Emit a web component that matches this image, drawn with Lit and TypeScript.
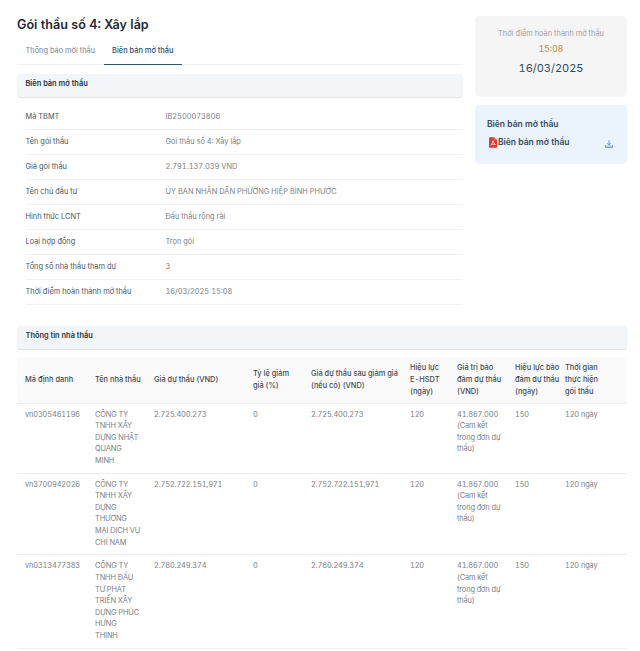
import { LitElement, html, css, svg } from 'lit';
import { customElement } from 'lit/decorators.js';

const INFO: [string, string][] = [
  ['Mã TBMT', 'IB2500073806'],
  ['Tên gói thầu', 'Gói thầu số 4: Xây lắp'],
  ['Giá gói thầu', '2.791.137.039 VND'],
  ['Tên chủ đầu tư', 'ỦY BAN NHÂN DÂN PHƯỜNG HIỆP BÌNH PHƯỚC'],
  ['Hình thức LCNT', 'Đấu thầu rộng rãi'],
  ['Loại hợp đồng', 'Trọn gói'],
  ['Tổng số nhà thầu tham dự', '3'],
  ['Thời điểm hoàn thành mở thầu', '16/03/2025 15:08'],
];

// titles carry their line breaks, the cells wrap by hand
const COLS = [
  { title: 'Mã định danh', width: 70 },
  { title: 'Tên nhà thầu', width: 59 },
  { title: 'Giá dự thầu (VND)', width: 99 },
  { title: 'Tỷ lệ giảm\ngiá (%)', width: 58 },
  { title: 'Giá dự thầu sau giảm giá\n(nếu có) (VND)', width: 99 },
  { title: 'Hiệu lực\nE-HSDT\n(ngày)', width: 47 },
  { title: 'Giá trị bảo\nđảm dự thầu\n(VND)', width: 58 },
  { title: 'Hiệu lực bảo\nđảm dự thầu\n(ngày)', width: 50 },
  { title: 'Thời gian\nthực hiện\ngói thầu', width: 70 },
];

const BOND = '41.867.000\n(Cam kết\ntrong đơn dự\nthầu)';

const ROWS = [
  ['vn0305461196', 'CÔNG TY\nTNHH XÂY\nDỰNG NHẬT\nQUANG\nMINH', '2.725.400.273', '0', '2.725.400.273', '120', BOND, '150', '120 ngày'],
  ['vn3700942026', 'CÔNG TY\nTNHH XÂY\nDỰNG\nTHƯƠNG\nMẠI DỊCH VỤ\nCHÍ NAM', '2.752.722.151,971', '0', '2.752.722.151,971', '120', BOND, '150', '120 ngày'],
  ['vn0313477383', 'CÔNG TY\nTNHH ĐẦU\nTƯ PHÁT\nTRIỂN XÂY\nDỰNG PHÚC\nHƯNG\nTHỊNH', '2.780.249.374', '0', '2.780.249.374', '120', BOND, '150', '120 ngày'],
];

const pdfIcon = svg`<svg class="pdf" viewBox="0 0 9 12" width="8" height="11">
  <path d="M1 0h5l3 3v8a1 1 0 0 1-1 1H1a1 1 0 0 1-1-1V1a1 1 0 0 1 1-1z" fill="#e2382e"/>
  <path d="M6 0l3 3H6z" fill="#f29a94"/>
  <path d="M4.400 4c.5 1.800 1.200 3.200 2.800 4.200M4.400 4c-.1 1.800-.9 3.600-2.400 5.200M2.200 8.800c1.600-.9 3.200-1.100 5-.6" fill="none" stroke="#fff" stroke-width=".8"/>
</svg>`;

const downloadIcon = svg`<svg class="dl" viewBox="0 0 10 10" width="8" height="8" fill="none" stroke="#5b83c4" stroke-width="1">
  <path d="M5 0.500v5.500M2.800 4L5 6.200L7.200 4"/>
  <path d="M.7 6.500v2.700h8.600v-2.700" fill="#c3d4ee"/>
</svg>`;

@customElement('app-root')
export class AppRoot extends LitElement {
  static styles = css`
    :host {
      display: block;
      width: 640px;
      height: 651px;
      overflow: hidden;
      background: #fff;
      color: #7b7f85;
      font-family: Inter, 'Noto Sans', sans-serif;
      font-size: 7.400px;
      font-variant-numeric: tabular-nums;
    }
    .page {
      padding: 16px 13px 0 17px;
    }
    .top {
      display: flex;
      gap: 12px;
    }
    .main {
      width: 446px;
    }
    .side {
      width: 152px;
      display: flex;
      flex-direction: column;
      gap: 8px;
    }
    h1 {
      margin: 0;
      font-size: 12.600px;
      line-height: 17px;
      font-weight: 600;
      color: #1f2937;
    }
    .tabs {
      display: flex;
      box-sizing: border-box;
      margin-top: 9px;
      height: 23px;
      border-bottom: 1px solid #eef0f2;
      line-height: 17px;
    }
    .tab {
      padding: 0 8.500px;
      color: #7b8490;
    }
    .tab.active {
      height: 23px;
      box-sizing: border-box;
      font-weight: 500;
      color: #2f4a63;
      border-bottom: 1px solid #2f5673;
    }
    .bar {
      height: 23px;
      line-height: 20px;
      padding-left: 8.500px;
      border-radius: 4px;
      background: #f3f6f9;
      box-shadow: 0 1px 1px rgba(0, 0, 0, 0.12);
      color: #27323f;
      font-weight: 600;
    }
    .info-bar {
      margin-top: 9px;
    }
    .info {
      margin: 8px 0 0 8.500px;
    }
    .info-row {
      display: flex;
      box-sizing: border-box;
      height: 25px;
      line-height: 24px;
      border-bottom: 1px solid #f0f1f3;
    }
    .info-label {
      width: 140px;
      color: #4b5563;
    }
    .card-time {
      height: 81px;
      border-radius: 5px;
      background: #f5f5f6;
      text-align: center;
      padding-top: 13px;
      box-sizing: border-box;
      color: #9a9da3;
    }
    .time {
      margin-top: 6px;
      color: #c98f45;
      font-weight: 500;
      font-size: 8.500px;
      line-height: 11px;
    }
    .date {
      margin-top: 6px;
      color: #2f4a63;
      font-size: 11px;
      line-height: 14px;
    }
    .card-file {
      height: 59px;
      border-radius: 5px;
      background: #ebf4fc;
      box-sizing: border-box;
      padding: 14px 14px 0 12px;
      color: #2f4a63;
      font-weight: 600;
      font-size: 8.500px;
      line-height: 11px;
    }
    .file {
      display: flex;
      align-items: center;
      margin-top: 7px;
    }
    .pdf {
      flex: none;
      margin: -1px 1px 0 2px;
    }
    .dl {
      margin: 3px 0 0 auto;
      flex: none;
    }
    .bidders {
      margin-top: 21px;
    }
    table {
      margin-top: 8px;
      width: 610px;
      table-layout: fixed;
      border-collapse: collapse;
    }
    th,
    td {
      padding: 0 0 0 8px;
      line-height: 11.600px;
      text-align: left;
      white-space: pre;
    }
    th {
      height: 46px;
      box-sizing: border-box;
      background: #fafafa;
      color: #3f4854;
      font-weight: 500;
      border-bottom: 1px solid #edeef0;
    }
    td {
      vertical-align: top;
      padding-top: 5px;
      padding-bottom: 6.200px;
      letter-spacing: -0.120px;
      color: #7b7f85;
      border-bottom: 1px solid #edeef0;
    }
  `;

  render() {
    return html`
      <div class="page">
        <div class="top">
          <div class="main">
            <h1>Gói thầu số 4: Xây lắp</h1>
            <div class="tabs">
              <div class="tab">Thông báo mời thầu</div>
              <div class="tab active">Biên bản mở thầu</div>
            </div>
            <div class="bar info-bar">Biên bản mở thầu</div>
            <div class="info">
              ${INFO.map(
                ([label, value]) => html`
                  <div class="info-row">
                    <div class="info-label">${label}</div>
                    <div>${value}</div>
                  </div>
                `
              )}
            </div>
          </div>
          <div class="side">
            <div class="card-time">
              <div>Thời điểm hoàn thành mở thầu</div>
              <div class="time">15:08</div>
              <div class="date">16/03/2025</div>
            </div>
            <div class="card-file">
              <div>Biên bản mở thầu</div>
              <div class="file">${pdfIcon}<span>Biên bản mở thầu</span>${downloadIcon}</div>
            </div>
          </div>
        </div>
        <div class="bar bidders">Thông tin nhà thầu</div>
        <table>
          <colgroup>
            ${COLS.map((c) => html`<col style="width:${c.width}px" />`)}
          </colgroup>
          <thead>
            <tr>${COLS.map((c) => html`<th>${c.title}</th>`)}</tr>
          </thead>
          <tbody>
            ${ROWS.map((r) => html`<tr>${r.map((v) => html`<td>${v}</td>`)}</tr>`)}
          </tbody>
        </table>
      </div>
    `;
  }
}
